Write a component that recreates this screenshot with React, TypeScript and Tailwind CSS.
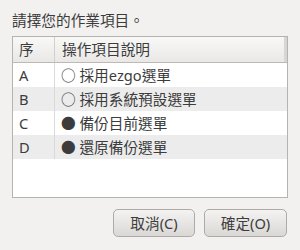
const rows = [
  { key: 'A', text: '○ 採用ezgo選單' },
  { key: 'B', text: '○ 採用系統預設選單' },
  { key: 'C', text: '● 備份目前選單' },
  { key: 'D', text: '● 還原備份選單' },
];

const font = { fontFamily: '"Noto Sans", "Noto Sans CJK TC", sans-serif' };

export default function App() {
  return (
    <div className="w-[300px] h-[250px] bg-[#f2f1f0] text-[#3c3c3c] text-[14.67px] relative overflow-hidden" style={font}>
      <div className="absolute left-[12px] top-[10px] leading-[20px]">請擇您的作業項目。</div>
      <div className="absolute left-[12px] top-[36px] w-[276px] h-[162px] border border-[#b6b3ae] bg-white">
        <div className="flex h-[26px] border-b border-[#bdbab5] bg-gradient-to-b from-[#f8f8f7] to-[#e9e8e6]">
          <div className="w-[42px] border-r border-[#d3d0cc] pl-[6px] leading-[25px]">序</div>
          <div className="flex-1 pl-[7px] leading-[25px]">操作項目說明</div>
          <div className="w-[3px] bg-[#d8d6d3]" />
        </div>
        {rows.map((r, i) => (
          <div key={r.key} className={`flex h-[24px] ${i % 2 === 1 ? 'bg-[#ececec]' : 'bg-white'}`}>
            <div className="w-[42px] border-r border-[#d9d9d9] pl-[6px] leading-[24px]">{r.key}</div>
            <div className="flex-1 pl-[6px] leading-[24px] whitespace-nowrap">{r.text}</div>
          </div>
        ))}
      </div>
      <div className="absolute left-[113px] top-[209px] flex gap-[9px]">
        <button className="w-[82px] h-[28px] rounded-[5px] border border-[#aeaba6] bg-gradient-to-b from-[#f4f3f2] to-[#dad8d5] text-[#3c3c3c] leading-[26px]">取消(C)</button>
        <button className="w-[83px] h-[28px] rounded-[5px] border border-[#aeaba6] bg-gradient-to-b from-[#f4f3f2] to-[#dad8d5] text-[#3c3c3c] leading-[26px]">確定(O)</button>
      </div>
    </div>
  );
}
